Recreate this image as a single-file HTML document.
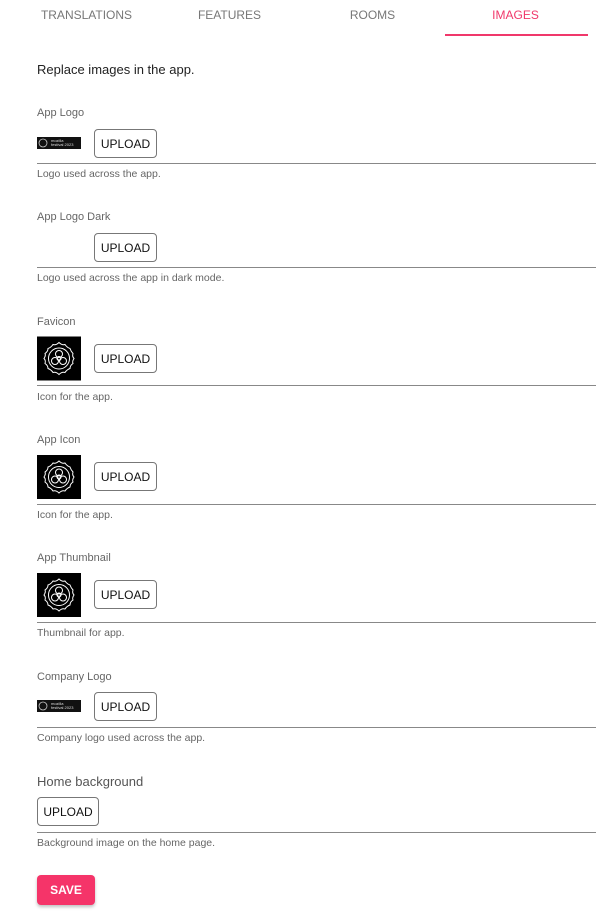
<!DOCTYPE html>
<html><head><meta charset="utf-8"><style>
*{margin:0;padding:0;box-sizing:border-box}
body{width:596px;height:921px;background:#fff;font-family:"Liberation Sans",sans-serif;position:relative;overflow:hidden;color:#222}
.a{position:absolute}
.tab{position:absolute;top:8px;width:143px;text-align:center;font-size:12px;color:#777;letter-spacing:0}
.lbl{position:absolute;left:37px;font-size:11px;color:#666}
.help{position:absolute;left:37px;font-size:10.5px;color:#666}
.line{position:absolute;left:37px;right:0;height:1px;background:#888}
.btn{position:absolute;width:63px;height:29px;border:1px solid #777;border-radius:4px;font-size:12px;color:#111;text-align:center;line-height:28px;background:#fff}
.logo{position:absolute;left:37px;width:44px;height:12px;background:#111;display:flex;align-items:center}
.logo span{font-size:4px;color:#ddd;margin-left:3px;line-height:4px}
</style></head><body>
<div class="tab" style="left:15px">TRANSLATIONS</div>
<div class="tab" style="left:158px">FEATURES</div>
<div class="tab" style="left:301px">ROOMS</div>
<div class="tab" style="left:444px;color:#f0386b">IMAGES</div>
<div class="a" style="left:445px;top:34px;width:143px;height:2px;background:#f0386b"></div>

<div class="a" style="left:37px;top:62px;font-size:13px;color:#222">Replace images in the app.</div>

<svg width="0" height="0" style="position:absolute"><defs>
<symbol id="ic" viewBox="0 0 44 44"><rect width="44" height="44" fill="#000"/>
<g fill="none" stroke="#fff" stroke-width="1">
<path d="M22 6 Q25 9 28 8 Q30 11 33 12 Q34 15 36 17 Q35 20 37 22 Q35 25 36 27 Q33 29 33 32 Q30 33 28 36 Q25 35 22 38 Q19 35 16 36 Q14 33 11 32 Q11 29 8 27 Q9 24 7 22 Q9 19 8 17 Q11 15 11 12 Q14 11 16 8 Q19 9 22 6Z"/>
<circle cx="22" cy="22" r="10.5"/>
<circle cx="22" cy="17.5" r="3.5"/><circle cx="18" cy="24.5" r="3.5"/><circle cx="26" cy="24.5" r="3.5"/><circle cx="22" cy="22" r="2"/>
</g></symbol></defs></svg>

<div class="lbl" style="top:107px">App Logo</div>
<div class="logo" style="top:137px"><svg width="10" height="10" viewBox="0 0 10 10" style="margin-left:1px"><circle cx="5" cy="5" r="4" fill="none" stroke="#ccc" stroke-width="0.8"/></svg><span>mozilla<br>festival 2023</span></div>
<div class="btn" style="left:94px;top:129px">UPLOAD</div>
<div class="line" style="top:163px"></div>
<div class="help" style="top:168px">Logo used across the app.</div>

<div class="lbl" style="top:211px">App Logo Dark</div>
<div class="btn" style="left:94px;top:233px">UPLOAD</div>
<div class="line" style="top:267px"></div>
<div class="help" style="top:272px">Logo used across the app in dark mode.</div>

<div class="lbl" style="top:316px">Favicon</div>
<svg class="a" style="left:37px;top:336px" width="44" height="45"><use href="#ic"/></svg>
<div class="btn" style="left:94px;top:344px">UPLOAD</div>
<div class="line" style="top:385px"></div>
<div class="help" style="top:391px">Icon for the app.</div>

<div class="lbl" style="top:434px">App Icon</div>
<svg class="a" style="left:37px;top:455px" width="44" height="44"><use href="#ic"/></svg>
<div class="btn" style="left:94px;top:462px">UPLOAD</div>
<div class="line" style="top:504px"></div>
<div class="help" style="top:509px">Icon for the app.</div>

<div class="lbl" style="top:552px">App Thumbnail</div>
<svg class="a" style="left:37px;top:573px" width="44" height="44"><use href="#ic"/></svg>
<div class="btn" style="left:94px;top:580px">UPLOAD</div>
<div class="line" style="top:622px"></div>
<div class="help" style="top:627px">Thumbnail for app.</div>

<div class="lbl" style="top:671px">Company Logo</div>
<div class="logo" style="top:700px"><svg width="10" height="10" viewBox="0 0 10 10" style="margin-left:1px"><circle cx="5" cy="5" r="4" fill="none" stroke="#ccc" stroke-width="0.8"/></svg><span>mozilla<br>festival 2023</span></div>
<div class="btn" style="left:94px;top:692px">UPLOAD</div>
<div class="line" style="top:727px"></div>
<div class="help" style="top:732px">Company logo used across the app.</div>

<div class="a" style="left:37px;top:774px;font-size:13px;color:#555">Home background</div>
<div class="btn" style="left:37px;top:797px;width:62px">UPLOAD</div>
<div class="line" style="top:832px"></div>
<div class="help" style="top:837px">Background image on the home page.</div>

<div class="a" style="left:37px;top:875px;width:58px;height:30px;background:#f53469;border-radius:4px;color:#fff;font-size:12px;font-weight:bold;text-align:center;line-height:30px;box-shadow:0 2px 3px rgba(0,0,0,0.25)">SAVE</div>
</body></html>
